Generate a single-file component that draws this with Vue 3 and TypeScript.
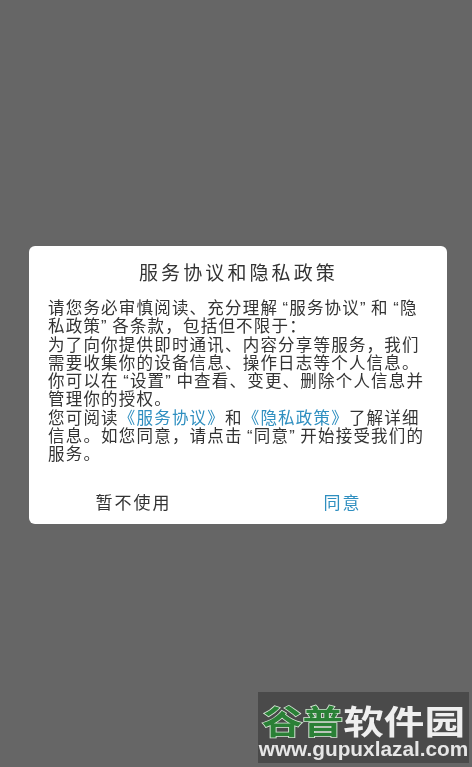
<script setup lang="ts">
</script>

<template>
  <div class="screen">
    <section class="dialog">
      <h1 class="title">服务协议和隐私政策</h1>
      <div class="body">
        <div class="line">请您务必审慎阅读、充分理解<span class="qo">“</span>服务协议<span class="qc">”</span>和<span class="qo">“</span>隐</div>
        <div class="line">私政策<span class="qc">”</span>各条款，包括但不限于：</div>
        <div class="line">为了向你提供即时通讯、内容分享等服务，我们</div>
        <div class="line">需要收集你的设备信息、操作日志等个人信息。</div>
        <div class="line">你可以在<span class="qo">“</span>设置<span class="qc">”</span>中查看、变更、删除个人信息并</div>
        <div class="line">管理你的授权。</div>
        <div class="line">您可阅读<span class="link">《服务协议》</span>和<span class="link">《隐私政策》</span>了解详细</div>
        <div class="line">信息。如您同意，请点击<span class="qo">“</span>同意<span class="qc">”</span>开始接受我们的</div>
        <div class="line">服务。</div>
      </div>
      <div class="actions">
        <button class="btn">暂不使用</button>
        <button class="btn agree">同意</button>
      </div>
    </section>
    <div class="mark">
      <div class="mark-cn"><span class="green">谷普</span><span>软件园</span></div>
      <div class="mark-url">www.gupuxlazal.com</div>
    </div>
  </div>
</template>

<style>
html, body { margin: 0; padding: 0; }
</style>

<style scoped>
.screen {
  position: relative;
  box-sizing: border-box;
  width: 472px;
  height: 767px;
  overflow: hidden;
  padding: 246px 25px 0 29px;
  background: #666666;
  font-family: "Noto Sans CJK SC", "Liberation Sans", sans-serif;
  filter: blur(0.35px);
}
.dialog {
  box-sizing: border-box;
  height: 278px;
  padding: 14px 0 0 19px;
  border-radius: 6px;
  background: #ffffff;
}
.title {
  margin: 0 0 0 91px;
  font-size: 19px;
  line-height: 24px;
  font-weight: 400;
  letter-spacing: 3.1px;
  white-space: nowrap;
  color: #333333;
}
.body {
  margin-top: 14px;
  font-size: 16.5px;
  line-height: 18.25px;
  letter-spacing: 1.2px;
  color: #333333;
}
.line {
  height: 18.25px;
  white-space: nowrap;
}
.qo, .qc {
  font-family: "Liberation Sans", sans-serif;
}
.qo { padding-left: 4.4px; }
.qc { padding-right: 4.4px; }
.link { color: #2f8fc0; }
.actions {
  display: flex;
  margin: 27.75px 0 0 -19px;
}
.btn {
  flex: 1;
  padding: 0;
  border: 0;
  background: none;
  font: inherit;
  font-size: 17px;
  line-height: 24px;
  letter-spacing: 2px;
  color: #333333;
}
.agree { color: #2f8fc0; }
.mark {
  position: absolute;
  left: 258px;
  top: 692px;
  box-sizing: border-box;
  width: 211px;
  height: 71px;
  padding-top: 9px;
  background: #4a4a4a;
  text-align: center;
  color: #efefef;
  font-weight: 700;
}
.mark-cn {
  font-size: 33px;
  line-height: 38px;
  white-space: nowrap;
  transform: scaleX(1.23);
}
.green {
  color: #2a8036;
  -webkit-text-stroke: 1.5px #d8e6d8;
  paint-order: stroke fill;
}
.mark-url {
  font-family: "Liberation Sans", sans-serif;
  font-size: 20.8px;
  line-height: 20px;
  white-space: nowrap;
  color: #e6e6e6;
}
</style>
